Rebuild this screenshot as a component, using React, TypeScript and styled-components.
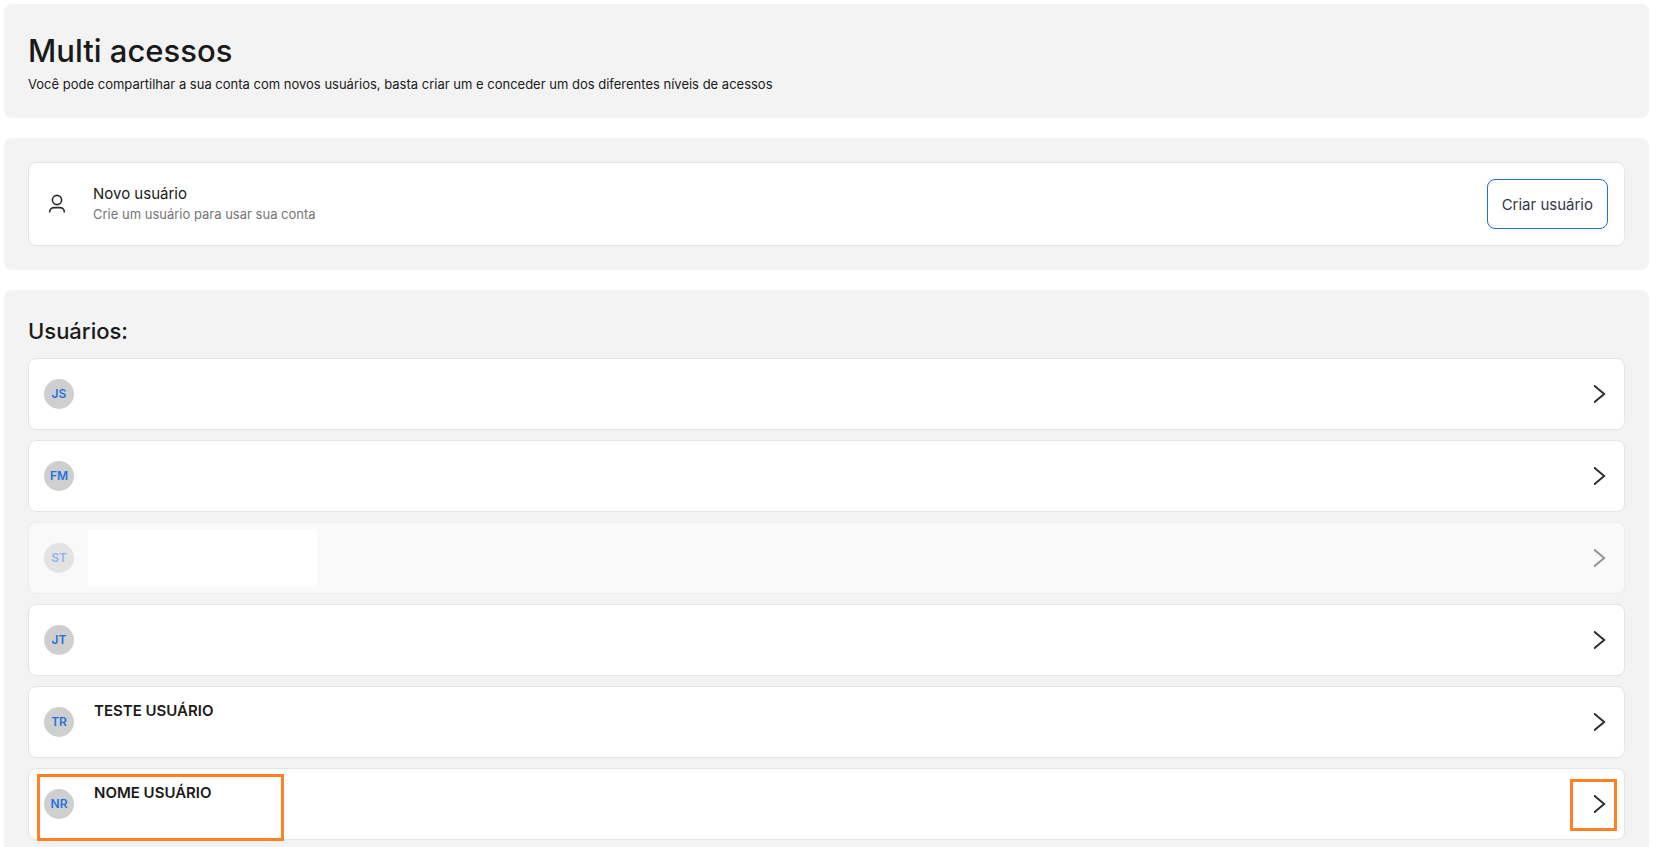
import React from "react";
import styled, { createGlobalStyle, css } from "styled-components";

const GlobalStyle = createGlobalStyle`
  *, *::before, *::after { box-sizing: border-box; }
  body {
    margin: 0;
    background: #fff;
    color: #1a1a1a;
    font-family: Inter, "Liberation Sans", sans-serif;
  }
  h1, h2, h3, p, ul { margin: 0; padding: 0; }
  button { font: inherit; cursor: pointer; }
`;

const Page = styled.main`
  display: flex;
  flex-direction: column;
  gap: 20px;
  padding: 4px 8px 0 4px;
`;

const Panel = styled.section`
  padding: 24px;
  border-radius: 8px;
  background: #f3f3f3;
`;

const Title = styled.h1`
  font-size: 31px;
  font-weight: 500;
  line-height: 46px;
`;

const Description = styled.p`
  font-size: 13px;
  line-height: 20px;
`;

const cardStyle = css`
  display: flex;
  align-items: center;
  border: 1px solid #e5e5e5;
  border-radius: 8px;
  background: #fff;
`;

const NewUserCard = styled.div`
  ${cardStyle}
  gap: 24px;
  padding: 16px;
`;

const NewUserText = styled.div`
  flex: 1;
`;

const NewUserTitle = styled.h2`
  font-size: 15px;
  font-weight: 400;
  line-height: 20px;
`;

const NewUserHint = styled.p`
  color: #757575;
  font-size: 13px;
  line-height: 20px;
`;

const CreateButton = styled.button`
  height: 50px;
  padding: 0 14px;
  border: 1px solid #1f6fd6;
  border-radius: 8px;
  background: #fff;
  color: #35354a;
  font-size: 15px;
`;

const UsersTitle = styled.h2`
  margin-bottom: 10px;
  font-size: 22px;
  font-weight: 500;
  line-height: 34px;
`;

const UserList = styled.ul`
  display: flex;
  flex-direction: column;
  gap: 10px;
  list-style: none;
`;

const UserRow = styled.li<{ $inactive?: boolean }>`
  ${cardStyle}
  position: relative;
  gap: 20px;
  height: 72px;
  padding: 0 15px;
  ${(p) =>
    p.$inactive &&
    css`
      border-color: #ececec;
      background: #f9f9f9;
    `}
`;

const Avatar = styled.span<{ $inactive?: boolean }>`
  display: grid;
  place-items: center;
  width: 30px;
  height: 30px;
  border-radius: 50%;
  background: #cfcfcf;
  color: #1f72de;
  font-size: 12px;
  font-weight: 600;
  line-height: 16px;
  opacity: ${(p) => (p.$inactive ? 0.5 : 1)};
`;

const UserInfo = styled.div`
  flex: 1;
  height: 48px;
`;

const UserName = styled.h3`
  font-size: 15px;
  font-weight: 600;
  line-height: 26px;
`;

const OpenButton = styled.button<{ $inactive?: boolean }>`
  display: grid;
  place-items: center;
  width: 18px;
  height: 24px;
  padding: 0;
  border: 0;
  background: none;
  color: #2b2b2b;
  opacity: ${(p) => (p.$inactive ? 0.5 : 1)};
`;

const Redaction = styled.span`
  position: absolute;
  top: 6px;
  left: 59px;
  width: 229px;
  height: 58px;
  background: #fff;
`;

const Highlight = styled.span<{ $side: "user" | "open" }>`
  position: absolute;
  border: 3px solid #ff8025;
  pointer-events: none;
  ${(p) =>
    p.$side === "user"
      ? css`
          top: 5px;
          left: 8px;
          width: 247px;
          height: 67px;
        `
      : css`
          top: 10px;
          right: 7px;
          width: 47px;
          height: 52px;
        `}
`;

const PersonIcon = () => (
  <svg width="24" height="24" viewBox="0 0 24 24" fill="none" stroke="#2b2b2b" strokeWidth="1.6" aria-hidden="true">
    <circle cx="12" cy="8" r="4.6" />
    <path d="M4.7 20.5V19.8C4.7 17.2 6.8 15.6 9.3 15.6H14.7C17.2 15.6 19.3 17.2 19.3 19.8V20.5" />
  </svg>
);

const ChevronIcon = () => (
  <svg width="12" height="18" viewBox="0 0 12 18" fill="none" stroke="currentColor" strokeWidth="1.9" aria-hidden="true">
    <path d="M-1 -0.4L10.2 9L-1 18.4" />
  </svg>
);

type User = {
  initials: string;
  name?: string;
  inactive?: boolean;
  highlighted?: boolean;
};

const users: User[] = [
  { initials: "JS" },
  { initials: "FM" },
  { initials: "ST", inactive: true },
  { initials: "JT" },
  { initials: "TR", name: "TESTE USUÁRIO" },
  { initials: "NR", name: "NOME USUÁRIO", highlighted: true },
];

export default function App() {
  return (
    <>
      <GlobalStyle />
      <Page>
        <Panel>
          <Title>Multi acessos</Title>
          <Description>
            Você pode compartilhar a sua conta com novos usuários, basta criar um e conceder um dos diferentes níveis de
            acessos
          </Description>
        </Panel>

        <Panel>
          <NewUserCard>
            <PersonIcon />
            <NewUserText>
              <NewUserTitle>Novo usuário</NewUserTitle>
              <NewUserHint>Crie um usuário para usar sua conta</NewUserHint>
            </NewUserText>
            <CreateButton type="button">Criar usuário</CreateButton>
          </NewUserCard>
        </Panel>

        <Panel>
          <UsersTitle>Usuários:</UsersTitle>
          <UserList>
            {users.map(({ initials, name, inactive, highlighted }) => (
              <UserRow key={initials} $inactive={inactive}>
                <Avatar $inactive={inactive}>{initials}</Avatar>
                <UserInfo>{name && <UserName>{name}</UserName>}</UserInfo>
                <OpenButton type="button" $inactive={inactive} aria-label={`Abrir ${name ?? initials}`}>
                  <ChevronIcon />
                </OpenButton>
                {inactive && <Redaction />}
                {highlighted && (
                  <>
                    <Highlight $side="user" />
                    <Highlight $side="open" />
                  </>
                )}
              </UserRow>
            ))}
          </UserList>
        </Panel>
      </Page>
    </>
  );
}
